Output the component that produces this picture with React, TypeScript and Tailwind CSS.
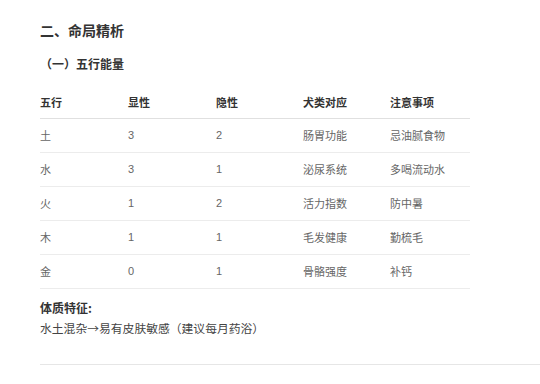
const rows = [
  { el: '土', show: '3', hide: '2', dog: '肠胃功能', note: '忌油腻食物' },
  { el: '水', show: '3', hide: '1', dog: '泌尿系统', note: '多喝流动水' },
  { el: '火', show: '1', hide: '2', dog: '活力指数', note: '防中暑' },
  { el: '木', show: '1', hide: '1', dog: '毛发健康', note: '勤梳毛' },
  { el: '金', show: '0', hide: '1', dog: '骨骼强度', note: '补钙' },
];

export default function App() {
  return (
    <div className="w-[540px] h-[384px] bg-white overflow-hidden font-['Noto_Sans_CJK_SC',sans-serif] text-[#333]">
      <div className="pl-10 pt-[20px]">
        <h2 className="text-[14px] font-bold leading-5 text-[#333]">二、命局精析</h2>
        <h3 className="mt-[14px] text-[12px] font-bold leading-5 text-[#333]">（一）五行能量</h3>
        <table className="mt-[20px] w-[430px] text-[11px] border-collapse">
          <thead>
            <tr className="border-b border-[#e0e0e0]">
              <th className="w-[88px] text-left font-bold h-[24px] align-top leading-4 text-[#333]">五行</th>
              <th className="w-[88px] text-left font-bold align-top leading-4 text-[#333]">显性</th>
              <th className="w-[87px] text-left font-bold align-top leading-4 text-[#333]">隐性</th>
              <th className="w-[87px] text-left font-bold align-top leading-4 text-[#333]">犬类对应</th>
              <th className="text-left font-bold align-top leading-4 text-[#333]">注意事项</th>
            </tr>
          </thead>
          <tbody>
            {rows.map((r) => (
              <tr key={r.el} className="border-b border-[#ececec] h-[34px] text-[#666]">
                <td>{r.el}</td>
                <td className="font-['Liberation_Sans',sans-serif]">{r.show}</td>
                <td className="font-['Liberation_Sans',sans-serif]">{r.hide}</td>
                <td>{r.dog}</td>
                <td>{r.note}</td>
              </tr>
            ))}
          </tbody>
        </table>
        <div className="mt-[9px] text-[12px] font-bold leading-5 text-[#333]">体质特征:</div>
        <div className="text-[11.8px] leading-5 text-[#444]">水土混杂→易有皮肤敏感（建议每月药浴）</div>
        <div className="mt-[26px] border-t border-[#e6e6e6]" />
      </div>
    </div>
  );
}
